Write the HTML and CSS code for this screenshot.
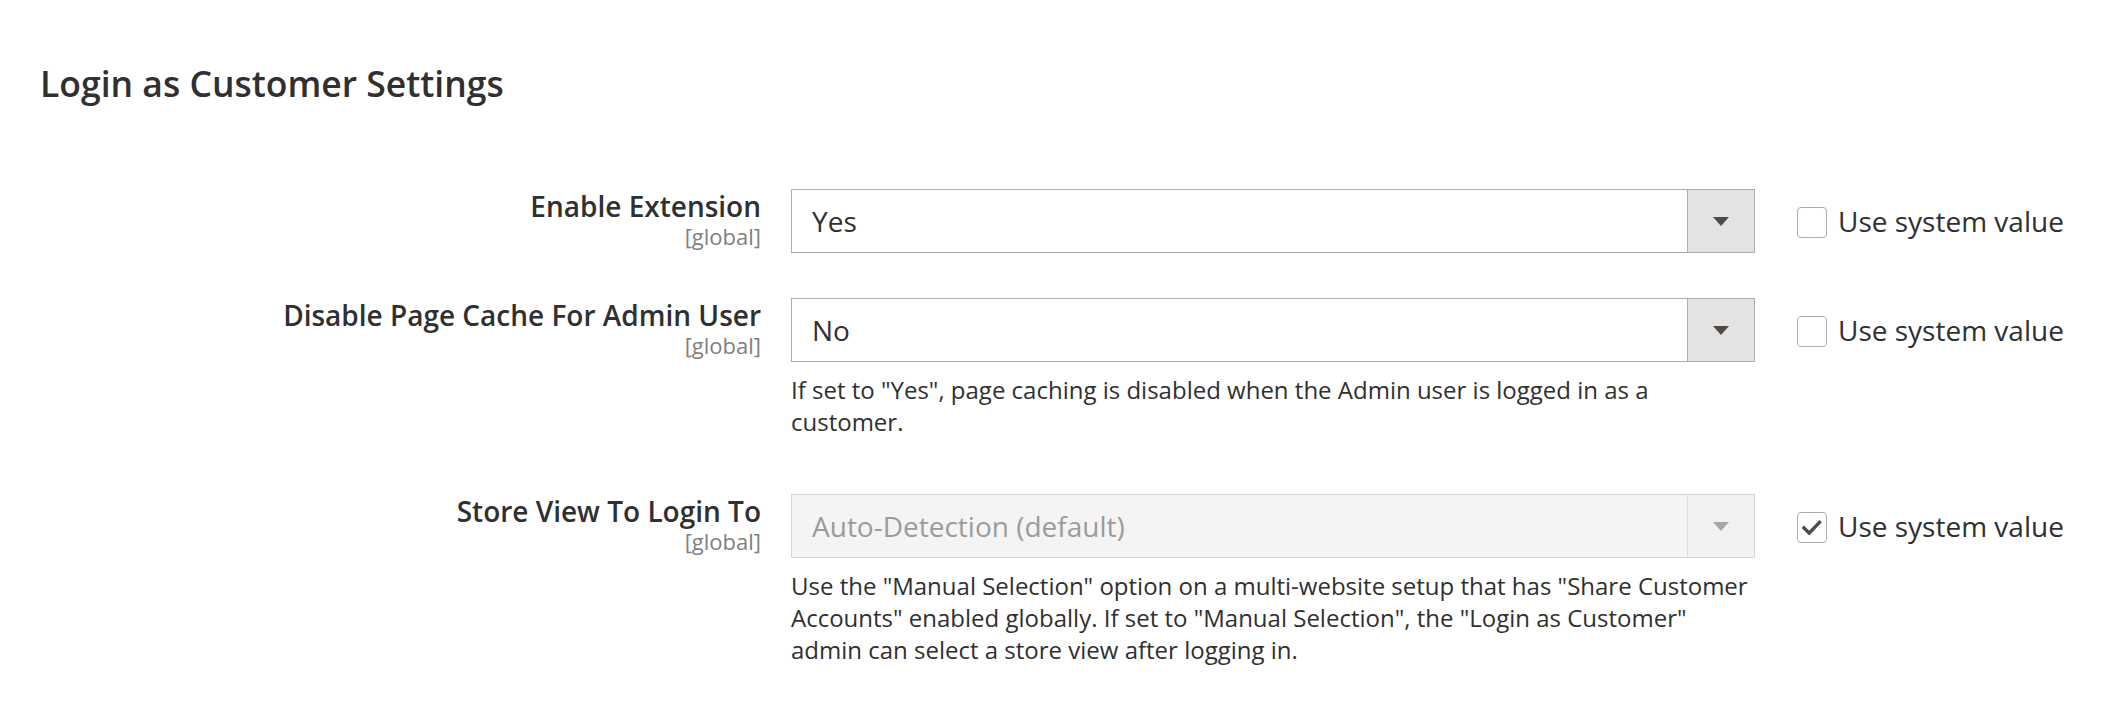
FILE: index.html
```html
<!DOCTYPE html>
<html lang="en">
<head>
<meta charset="utf-8">
<title>Login as Customer Settings</title>
<link rel="stylesheet" href="styles.css">
</head>
<body>
<main class="page">
  <h2 class="section-title">Login as Customer Settings</h2>

  <div class="field">
    <div class="label">
      <span class="label-text">Enable Extension</span>
      <span class="scope">[global]</span>
    </div>
    <div class="control">
      <div class="select">
        <span class="select-value">Yes</span>
        <span class="select-arrow"><span class="tri"></span></span>
      </div>
    </div>
    <label class="use-default">
      <span class="checkbox"></span>
      <span class="use-text">Use system value</span>
    </label>
  </div>

  <div class="field">
    <div class="label">
      <span class="label-text">Disable Page Cache For Admin User</span>
      <span class="scope">[global]</span>
    </div>
    <div class="control">
      <div class="select">
        <span class="select-value">No</span>
        <span class="select-arrow"><span class="tri"></span></span>
      </div>
      <p class="note">If set to "Yes", page caching is disabled when the Admin user is logged in as a customer.</p>
    </div>
    <label class="use-default">
      <span class="checkbox"></span>
      <span class="use-text">Use system value</span>
    </label>
  </div>

  <div class="field">
    <div class="label">
      <span class="label-text">Store View To Login To</span>
      <span class="scope">[global]</span>
    </div>
    <div class="control">
      <div class="select disabled">
        <span class="select-value">Auto-Detection (default)</span>
        <span class="select-arrow"><span class="tri"></span></span>
      </div>
      <p class="note">Use the "Manual Selection" option on a multi-website setup that has "Share Customer Accounts" enabled globally. If set to "Manual Selection", the "Login as Customer" admin can select a store view after logging in.</p>
    </div>
    <label class="use-default">
      <span class="checkbox checked">
        <svg viewBox="0 0 30 30" width="30" height="30" aria-hidden="true"><polyline points="6.5,15 12,20.5 23,9" fill="none" stroke="#514943" stroke-width="3.6" stroke-linecap="square"/></svg>
      </span>
      <span class="use-text">Use system value</span>
    </label>
  </div>
</main>
</body>
</html>
```

FILE: styles.css
```css
* { box-sizing: border-box; }

html, body {
  margin: 0;
  padding: 0;
  background: #ffffff;
}

body {
  font-family: "Open Sans", "Liberation Sans", sans-serif;
  color: #303030;
}

.page {
  padding: 62px 0 0 40px;
}

.section-title {
  margin: 0 0 85px 0;
  font-size: 35.5px;
  line-height: 42px;
  font-weight: 600;
  color: #303030;
}

.field {
  display: grid;
  grid-template-columns: 721px 964px auto;
  column-gap: 30px;
  align-items: start;
  margin-bottom: 45px;
}

.label {
  display: flex;
  flex-direction: column;
  align-items: flex-end;
  text-align: right;
  padding-top: 1px;
}

.label-text {
  font-size: 28px;
  line-height: 32px;
  font-weight: 600;
  color: #303030;
}

.scope {
  font-size: 22px;
  line-height: 29px;
  color: #808080;
}

.select {
  display: flex;
  height: 64px;
  border: 1px solid #adadad;
  background: #ffffff;
}

.select-value {
  flex: 1;
  display: flex;
  align-items: center;
  padding-left: 20px;
  font-size: 28px;
  color: #303030;
}

.select-arrow {
  width: 67px;
  display: flex;
  align-items: center;
  justify-content: center;
  background: #e3e3e3;
  border-left: 1px solid #adadad;
}

.tri {
  width: 0;
  height: 0;
  border-left: 8px solid transparent;
  border-right: 8px solid transparent;
  border-top: 9px solid #514943;
}

.select.disabled {
  border-color: #d6d6d6;
  background: #f4f4f4;
}

.select.disabled .select-value {
  color: #9b9b9b;
}

.select.disabled .select-arrow {
  background: #f1f1f1;
  border-left-color: #dcdcdc;
}

.select.disabled .tri {
  border-top-color: #aaa6a2;
}

.note {
  margin: 12px 0 0 0;
  padding-bottom: 11px;
  font-size: 24px;
  line-height: 32px;
  color: #303030;
}

.use-default {
  display: flex;
  align-items: center;
  gap: 11px;
  margin-left: 12px;
  height: 64px;
}

.checkbox {
  width: 30px;
  height: 31px;
  border: 1px solid #adadad;
  border-radius: 4px;
  background: #ffffff;
  display: flex;
  align-items: center;
  justify-content: center;
  margin-top: 3px;
}

.checkbox svg {
  display: block;
}

.use-text {
  font-size: 28px;
  line-height: 32px;
  color: #303030;
}
```
